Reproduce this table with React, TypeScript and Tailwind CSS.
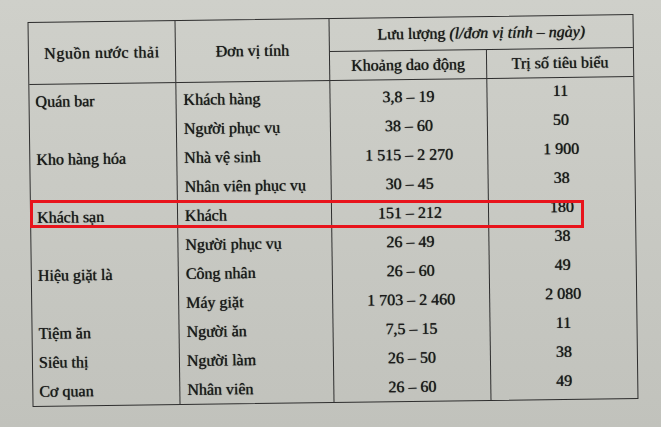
import React from "react";

const rows: [string, string, string, string][] = [
  ["Quán bar", "Khách hàng", "3,8 – 19", "11"],
  ["", "Người phục vụ", "38 – 60", "50"],
  ["Kho hàng hóa", "Nhà vệ sinh", "1 515 – 2 270", "1 900"],
  ["", "Nhân viên phục vụ", "30 – 45", "38"],
  ["Khách sạn", "Khách", "151 – 212", "180"],
  ["", "Người phục vụ", "26 – 49", "38"],
  ["Hiệu giặt là", "Công nhân", "26 – 60", "49"],
  ["", "Máy giặt", "1 703 – 2 460", "2 080"],
  ["Tiệm ăn", "Người ăn", "7,5 – 15", "11"],
  ["Siêu thị", "Người làm", "26 – 50", "38"],
  ["Cơ quan", "Nhân viên", "26 – 60", "49"],
];

export default function App() {
  return (
    <div
      className="relative w-[661px] h-[427px] overflow-hidden bg-gradient-to-b from-[#cfd0ca] via-[#c8c9c3] to-[#c1c2bc] text-[#1a1a1a] text-[16px] [text-shadow:0_0_0.7px_#1a1a1a]"
      style={{ fontFamily: '"Liberation Serif", "DejaVu Serif", serif' }}
    >
      <div className="pt-[18px] pl-[30px]">
        <div className="w-[606px] rotate-[-0.75deg] border-[1.5px] border-[#2e2e2e]">
          {/* header */}
          <div className="flex h-[62px] border-b-[1.5px] border-[#2e2e2e]">
            <div className="w-[147px] flex items-center justify-center border-r-[1.5px] border-[#2e2e2e] tracking-[0.5px]">
              Nguồn nước thải
            </div>
            <div className="w-[154px] flex items-center justify-center border-r-[1.5px] border-[#2e2e2e]">
              Đơn vị tính
            </div>
            <div className="flex-1 flex flex-col">
              <div className="h-[33px] flex items-center justify-center border-b-[1.5px] border-[#2e2e2e]">
                <span>
                  Lưu lượng <i>(l/đơn vị tính – ngày)</i>
                </span>
              </div>
              <div className="flex-1 flex">
                <div className="w-[157px] flex items-center justify-center border-r-[1.5px] border-[#2e2e2e]">
                  Khoảng dao động
                </div>
                <div className="flex-1 flex items-center justify-center">Trị số tiêu biểu</div>
              </div>
            </div>
          </div>
          {/* body */}
          <div className="flex">
            <div className="w-[147px] border-r-[1.5px] border-[#2e2e2e] pt-[2px]">
              {rows.map((r, i) => (
                <div key={i} className="h-[29px] flex items-center pl-[6px]">
                  {r[0]}
                </div>
              ))}
            </div>
            <div className="w-[154px] border-r-[1.5px] border-[#2e2e2e] pt-[2px]">
              {rows.map((r, i) => (
                <div key={i} className="h-[29px] flex items-center pl-[7px]">
                  {r[1]}
                </div>
              ))}
            </div>
            <div className="w-[157px] border-r-[1.5px] border-[#2e2e2e] pt-[2px]">
              {rows.map((r, i) => (
                <div key={i} className="h-[29px] flex items-center justify-center">
                  {r[2]}
                </div>
              ))}
            </div>
            <div className="flex-1 -translate-y-[2px]">
              {rows.map((r, i) => (
                <div key={i} className="h-[29px] flex items-center justify-center">
                  {r[3]}
                </div>
              ))}
            </div>
          </div>
        </div>
      </div>
      <div className="absolute left-[30px] top-[200px] w-[554px] h-[28px] border-[3px] border-[#e8141c]" />
    </div>
  );
}
